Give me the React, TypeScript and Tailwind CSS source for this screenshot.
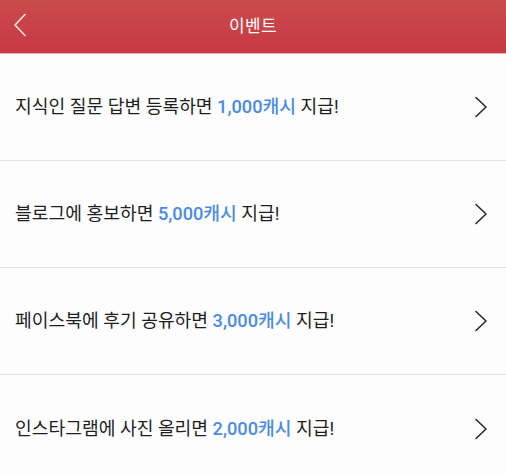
import { ChevronRight } from 'lucide-react';

const events = [
    { pre: '지식인 질문 답변 등록하면 ', amount: '1,000캐시' },
    { pre: '블로그에 홍보하면 ', amount: '5,000캐시' },
    { pre: '페이스북에 후기 공유하면 ', amount: '3,000캐시' },
    { pre: '인스타그램에 사진 올리면 ', amount: '2,000캐시' },
];

export default function App() {
    return (
        <div className="w-[506px] h-[474px] overflow-hidden bg-[#fdfdfd] font-['Roboto','Noto_Sans_CJK_KR',sans-serif]">
            {/* Header */}
            <div className="relative h-[54px] flex items-center justify-center bg-gradient-to-b from-[#c94b4b] to-[#c73844] border-b border-[#e0b0b0]">
                <svg className="absolute left-[13px] top-[13px]" width="14" height="24" viewBox="0 0 14 24" fill="none">
                    <path d="M12 1.5 L2 12 L12 22.5" stroke="#f6e6e0" strokeWidth="1.6" strokeLinecap="round" strokeLinejoin="round" />
                </svg>
                <span className="text-[17px] text-white tracking-wide">이벤트</span>
            </div>

            {/* List */}
            <div className="flex flex-col">
                {events.map((e, i) => (
                    <div
                        key={i}
                        className={`h-[107px] flex items-center justify-between pl-[15px] pr-[18px] ${i < events.length - 1 ? 'border-b border-[#e2e2e2]' : ''}`}
                    >
                        <p className="text-[18.2px] text-[#1e1e1e]">
                            {e.pre}
                            <span className="text-[#4a8be3] font-medium">{e.amount}</span> 지급!
                        </p>
                        <svg width="14" height="22" viewBox="0 0 14 22" fill="none">
                            <path d="M2 1.5 L12 11 L2 20.5" stroke="#2a2a2a" strokeWidth="1.6" strokeLinecap="round" strokeLinejoin="round" />
                        </svg>
                    </div>
                ))}
            </div>
        </div>
    );
}
